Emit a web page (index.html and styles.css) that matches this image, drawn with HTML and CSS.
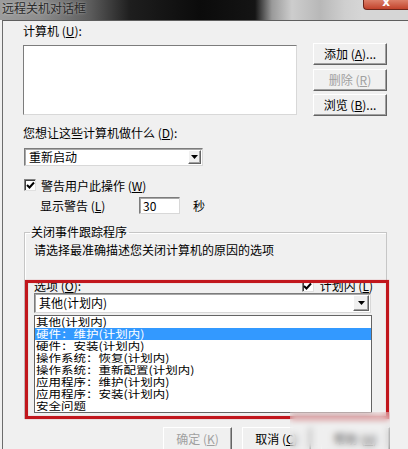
FILE: index.html
```html
<!DOCTYPE html>
<html lang="zh-CN">
<head>
<meta charset="utf-8">
<title>远程关机对话框</title>
<link rel="stylesheet" href="styles.css">
</head>
<body>
<div class="window">
  <div class="titlebar">
    <span class="title">远程关机对话框</span>
    <span class="close">x</span>
  </div>
  <div class="client">
    <div class="label first">计算机 (<u>U</u>):</div>
    <div class="computers">
      <div class="listbox"></div>
      <div class="side-buttons">
        <div class="btn">添加 (<u>A</u>)...</div>
        <div class="btn disabled">删除 (<u>R</u>)</div>
        <div class="btn">浏览 (<u>B</u>)...</div>
      </div>
    </div>
    <div class="label question">您想让这些计算机做什么 (<u>D</u>):</div>
    <div class="select action">
      <span class="select-text">重新启动</span>
      <span class="arrow"><svg width="7" height="4" viewBox="0 0 7 4"><path d="M0 0H7L3.5 4Z" fill="#000"/></svg></span>
    </div>
    <div class="check-row">
      <span class="checkbox"><svg width="9" height="9" viewBox="0 0 9 9"><path d="M1 4L3.5 6.5L8 1.5" stroke="#000" stroke-width="2" fill="none"/></svg></span>
      <span>警告用户此操作 (<u>W</u>)</span>
    </div>
    <div class="warn-row">
      <span class="warn-label">显示警告 (<u>L</u>)</span>
      <span class="textbox">30</span>
      <span class="unit">秒</span>
    </div>
    <fieldset class="group">
      <legend>关闭事件跟踪程序</legend>
      <div class="desc">请选择最准确描述您关闭计算机的原因的选项</div>
      <div class="options-head">
        <span>选项 (<u>O</u>):</span>
        <span class="planned">
          <span class="checkbox small"><svg width="9" height="9" viewBox="0 0 9 9"><path d="M1 4L3.5 6.5L8 1.5" stroke="#000" stroke-width="2" fill="none"/></svg></span>
          <span>计划内 (<u>L</u>)</span>
        </span>
      </div>
      <div class="select combo">
        <span class="select-text">其他(计划内)</span>
        <span class="arrow"><svg width="7" height="4" viewBox="0 0 7 4"><path d="M0 0H7L3.5 4Z" fill="#000"/></svg></span>
      </div>
      <ul class="dropdown">
        <li><span>其他(计划内)</span></li>
        <li class="selected"><span>硬件：维护(计划内)</span></li>
        <li><span>硬件：安装(计划内)</span></li>
        <li><span>操作系统：恢复(计划内)</span></li>
        <li><span>操作系统：重新配置(计划内)</span></li>
        <li><span>应用程序：维护(计划内)</span></li>
        <li><span>应用程序：安装(计划内)</span></li>
        <li><span>安全问题</span></li>
      </ul>
    </fieldset>
    <div class="footer">
      <div class="btn wide disabled">确定 (<u>K</u>)</div>
      <div class="btn wide">取消 (<u>C</u>)</div>
      <div class="btn wide">帮助 (<u>H</u>)</div>
    </div>
    <div class="annotation"></div>
    <div class="smudge"></div>
  </div>
</div>
</body>
</html>
```

FILE: styles.css
```css
html, body {
  margin: 0;
  padding: 0;
}
body {
  width: 408px;
  height: 449px;
  overflow: hidden;
  background: #f0f0f0;
  font-family: "Noto Sans CJK SC", "Noto Sans", sans-serif;
  font-size: 12px;
  color: #000;
}
u {
  text-decoration: underline;
  text-underline-offset: 1px;
}
.window {
  width: 408px;
  height: 449px;
}
.titlebar {
  height: 20px;
  display: flex;
  align-items: flex-start;
  background: linear-gradient(90deg, #9c9c9c 0, #8e8e8e 40px, #5c5c5c 90px, #1e1e1e 130px, #0b0b0b 200px, #141414 255px, #9a9a9a 272px, #cdcdcd 292px, #b8b8b8 320px, #cfcfcf 345px, #d6d6d6 362px);
}
.title {
  padding-left: 2px;
  line-height: 15px;
  color: #2a2a2a;
  text-shadow: 0 0 3px rgba(255, 255, 255, 0.5);
}
.close {
  margin-left: auto;
  width: 45px;
  height: 10px;
  box-sizing: border-box;
  overflow: hidden;
  background: linear-gradient(#dc7f69, #c2432c);
  border: 1px solid #6e261b;
  border-top: none;
  border-right: none;
  border-radius: 0 0 0 4px;
  color: #fff;
  font: bold 12px/4px "DejaVu Sans", sans-serif;
  text-align: center;
}
.client {
  position: relative;
  box-sizing: border-box;
  height: 429px;
  margin-left: 2px;
  border-left: 1px solid #6c6c6c;
  border-top: 1px solid #5e5e5e;
  padding: 2px 0 0 20px;
}
.label {
  line-height: 16px;
  height: 16px;
}
.computers {
  display: flex;
  align-items: flex-start;
  margin-top: 4px;
}
.listbox {
  box-sizing: border-box;
  width: 274px;
  height: 70px;
  margin-top: 2px;
  background: #fff;
  border: 1px solid;
  border-color: #7c7c7c #d8d8d8 #d8d8d8 #7c7c7c;
}
.side-buttons {
  display: flex;
  flex-direction: column;
  margin-left: 16px;
}
.btn {
  box-sizing: border-box;
  width: 74px;
  height: 22px;
  line-height: 19px;
  text-align: center;
  background: #f0f0f0;
  border: 1px solid;
  border-color: #fff #646464 #646464 #fff;
  box-shadow: inset -1px -1px 0 #a0a0a0;
}
.btn.disabled {
  color: #a0a0a0;
}
.side-buttons .btn + .btn {
  margin-top: 4px;
}
.side-buttons .btn:last-child {
  margin-top: 3px;
}
.question {
  margin-top: 9px;
}
.select {
  box-sizing: border-box;
  display: flex;
  align-items: center;
  background: #fff;
  border: 1px solid;
  border-color: #7c7c7c #d8d8d8 #d8d8d8 #7c7c7c;
  box-shadow: inset 1px 1px 0 #a8a8a8;
  padding: 0 1px 0 4px;
}
.select-text {
  flex: 1;
  line-height: 16px;
}
.arrow {
  box-sizing: border-box;
  display: flex;
  align-items: center;
  justify-content: center;
  background: #f0f0f0;
  border: 1px solid;
  border-color: #fff #646464 #646464 #fff;
  box-shadow: inset -1px -1px 0 #a0a0a0;
}
.action {
  width: 179px;
  height: 18px;
  margin: 7px 0 0 1px;
}
.action .arrow {
  width: 13px;
  height: 14px;
}
.check-row {
  display: flex;
  align-items: center;
  height: 16px;
  margin: 11px 0 0 1px;
}
.checkbox {
  box-sizing: border-box;
  display: inline-flex;
  align-items: center;
  justify-content: center;
  width: 12px;
  height: 12px;
  margin-right: 5px;
  background: #fff;
  border: 1px solid;
  border-color: #808080 #e0e0e0 #e0e0e0 #808080;
  box-shadow: inset 1px 1px 0 #404040;
}
.warn-row {
  display: flex;
  align-items: center;
  height: 17px;
  margin: 4px 0 0 17px;
}
.warn-label {
  width: 99px;
}
.textbox {
  box-sizing: border-box;
  width: 41px;
  height: 17px;
  line-height: 15px;
  padding-left: 3px;
  background: #fff;
  border: 1px solid;
  border-color: #7c7c7c #d8d8d8 #d8d8d8 #7c7c7c;
  box-shadow: inset 1px 1px 0 #a8a8a8;
}
.unit {
  margin-left: 13px;
}
.group {
  box-sizing: border-box;
  width: 363px;
  height: 195px;
  margin: 10px 0 0 1px;
  padding: 2px 0 0 9px;
  border: 1px solid #c6c6c6;
  box-shadow: inset 1px 1px 0 #fff;
}
.group legend {
  margin-left: -4px;
  padding: 0 2px 0 1px;
  line-height: 16px;
}
.desc {
  line-height: 16px;
}
.options-head {
  display: flex;
  align-items: center;
  justify-content: space-between;
  height: 14px;
  line-height: 14px;
  margin-top: 21px;
  padding-right: 13px;
}
.planned {
  display: flex;
  align-items: center;
}
.planned .checkbox {
  margin-right: 6px;
}
.combo {
  width: 337px;
  height: 20px;
  margin-top: 0;
}
.combo .arrow {
  width: 16px;
  height: 16px;
}
.dropdown {
  box-sizing: border-box;
  list-style: none;
  width: 338px;
  height: 98px;
  margin: 2px 0 0;
  padding: 0;
  background: #fff;
  border: 1px solid #646464;
  overflow: hidden;
}
.dropdown li {
  height: 12px;
  padding-left: 1px;
  white-space: nowrap;
}
.dropdown li span {
  display: inline-block;
  font-size: 12.5px;
  line-height: 14px;
  transform: scaleY(0.85);
  transform-origin: 0 0;
  vertical-align: top;
}
.dropdown li.selected {
  background: #3399ff;
  color: #fff;
}
.footer {
  display: flex;
  gap: 10px;
  margin: 8px 0 0 140px;
}
.btn.wide {
  width: 69px;
  height: 24px;
  line-height: 21px;
}
.annotation {
  position: absolute;
  left: 22px;
  top: 259px;
  box-sizing: border-box;
  width: 364px;
  height: 139px;
  border: 3px solid #c1161c;
  box-shadow: 0 0 1px rgba(193, 22, 28, 0.5), inset 0 0 1px rgba(193, 22, 28, 0.5);
}
.smudge {
  position: absolute;
  left: 287px;
  top: 391px;
  width: 100px;
  height: 40px;
  backdrop-filter: blur(3px);
  background: rgba(236, 236, 236, 0.35);
}
```
